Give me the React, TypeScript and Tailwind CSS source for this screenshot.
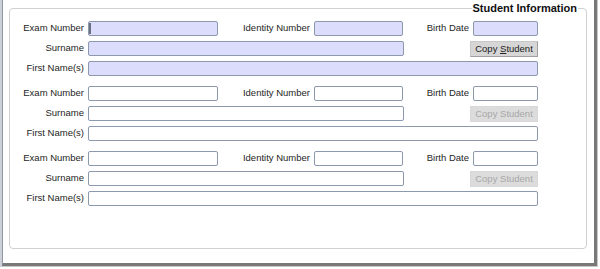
import React from "react";

const font = { fontFamily: '"Liberation Sans", Arial, sans-serif' };

function Input({ w, active }: { w: string; active: boolean }) {
  return (
    <div
      className={`${w} h-[15px] rounded-[2px] border border-[#8c98ac] ${
        active ? "bg-[#dcdcfc]" : "bg-white"
      }`}
    />
  );
}

function StudentSet({ active, first }: { active: boolean; first?: boolean }) {
  return (
    <div className="flex flex-col gap-[5px]">
      <div className="flex items-center h-[15px]">
        <div className="w-[75px] text-right pr-[1px]">Exam Number</div>
        <div className="ml-[3px] relative">
          <Input w="w-[130px]" active={active} />
          {first && <div className="absolute left-[1px] top-[2px] w-[2px] h-[11px] bg-[#6a7080]" />}
        </div>
        <div className="w-[93px] text-right pr-[1px]">Identity Number</div>
        <div className="ml-[3px]">
          <Input w="w-[89px]" active={active} />
        </div>
        <div className="w-[67px] text-right pr-[1px]">Birth Date</div>
        <div className="ml-[3px]">
          <Input w="w-[65px]" active={active} />
        </div>
      </div>
      <div className="flex items-center h-[15px]">
        <div className="w-[75px] text-right pr-[1px]">Surname</div>
        <div className="ml-[3px]">
          <Input w="w-[316px]" active={active} />
        </div>
        <button
          className={`ml-[66px] w-[68px] h-[16px] border leading-none ${
            active
              ? "bg-[#d6d6d6] border-[#c8c8c8] border-b-[#a0a0a0] border-r-[#a0a0a0] text-[#202020]"
              : "bg-[#dcdcdc] border-[#d8d8d8] text-[#a8a8a8]"
          }`}
        >
          Copy <span className={active ? "underline" : ""}>S</span>tudent
        </button>
      </div>
      <div className="flex items-center h-[15px]">
        <div className="w-[75px] text-right pr-[1px]">First Name(s)</div>
        <div className="ml-[3px]">
          <Input w="w-[450px]" active={active} />
        </div>
      </div>
    </div>
  );
}

export default function App() {
  return (
    <div className="w-[600px] h-[269px] bg-white text-[9.5px] text-[#1e1e1e]" style={font}>
      <div className="w-[598px] h-[267px] border-l-[2px] border-l-[#cdd0d8] border-r border-b border-r-[#c8c8c8] border-b-[#c8c8c8]">
        <div className="w-full h-full border-l border-l-[#9098a8] border-r-[3px] border-b-[3px] border-r-[#787878] border-b-[#787878] pl-[6px] pt-[8px]">
          <div className="relative w-[578px] h-[241px] rounded-[4px] border border-[#d0d0d0] pt-[12px]">
            <div className="absolute right-[8px] top-[-7px] bg-white px-[1px] text-[11px] font-bold text-[#101010] leading-[13px]">
              Student Information
            </div>
            <div className="flex flex-col gap-[10px]">
              <StudentSet active first />
              <StudentSet active={false} />
              <StudentSet active={false} />
            </div>
          </div>
        </div>
      </div>
    </div>
  );
}
